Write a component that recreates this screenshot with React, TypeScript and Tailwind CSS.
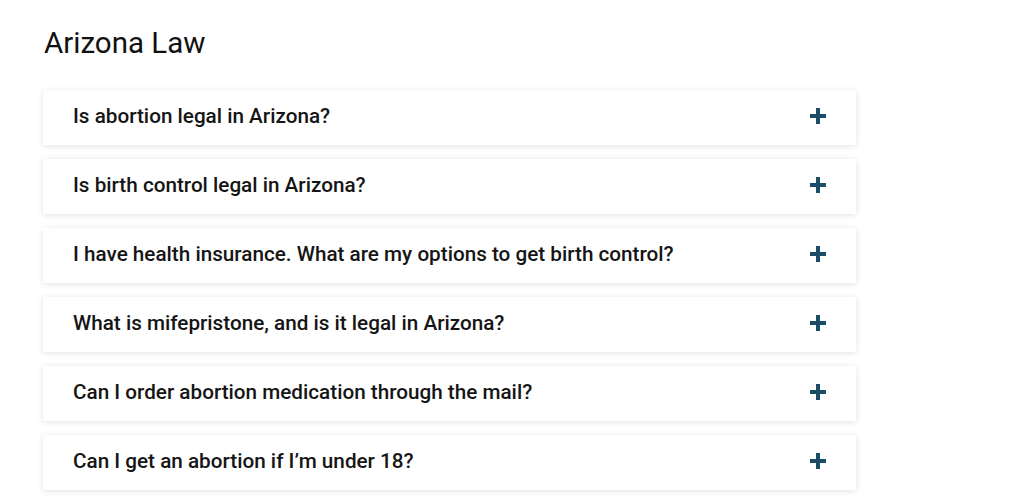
import React from "react";

const items = [
  "Is abortion legal in Arizona?",
  "Is birth control legal in Arizona?",
  "I have health insurance. What are my options to get birth control?",
  "What is mifepristone, and is it legal in Arizona?",
  "Can I order abortion medication through the mail?",
  "Can I get an abortion if I\u2019m under 18?",
];

function Plus() {
  return (
    <svg width="16" height="16" viewBox="0 0 16 16" aria-hidden>
      <rect x="6" y="0" width="4" height="16" fill="#1b4d68" />
      <rect x="0" y="6" width="16" height="4" fill="#1b4d68" />
    </svg>
  );
}

export default function App() {
  return (
    <div className="min-h-[496px] w-[1024px] bg-white font-['Roboto',sans-serif] text-[#151515]">
      <div className="pl-[43px] pt-[24px] w-[857px]">
        <h1 className="text-[29.5px] leading-[38px] font-normal ml-[1px] text-[#111]">Arizona Law</h1>
        <div className="mt-[28px] flex flex-col gap-[14px]">
          {items.map((t) => (
            <div
              key={t}
              className="h-[55px] w-[813px] bg-white flex items-center justify-between pl-[30px] pr-[30px] pb-[3px] shadow-[0_1px_6px_rgba(0,0,0,0.12)]"
            >
              <span className="text-[20.7px] leading-[26px] font-medium">{t}</span>
              <Plus />
            </div>
          ))}
        </div>
      </div>
    </div>
  );
}
